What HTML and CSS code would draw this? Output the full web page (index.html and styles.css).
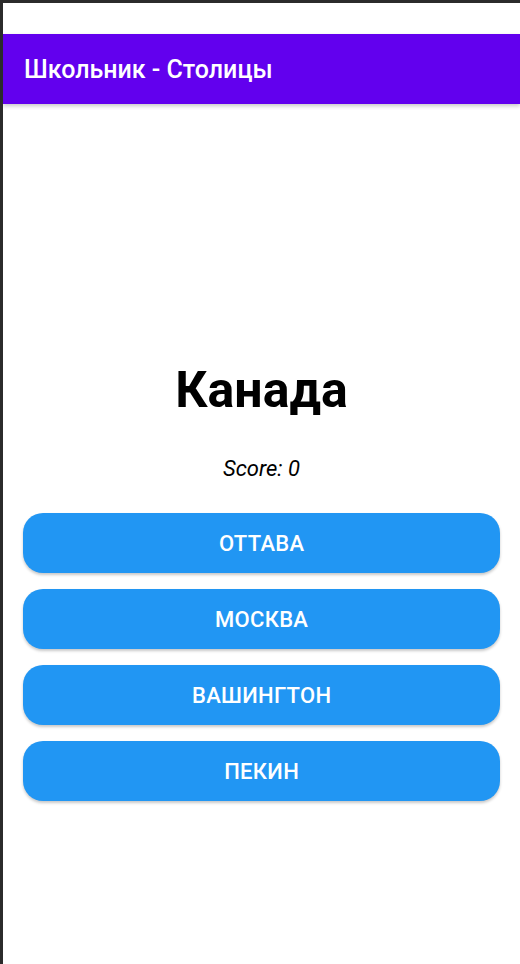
FILE: index.html
```html
<!DOCTYPE html>
<html lang="ru">
<head>
<meta charset="utf-8">
<title>Школьник - Столицы</title>
<link rel="stylesheet" href="styles.css">
</head>
<body>
<div class="frame">
  <div class="status"></div>
  <header class="appbar">Школьник - Столицы</header>
  <main class="content">
    <h1 class="country">Канада</h1>
    <p class="score">Score: 0</p>
    <div class="answers">
      <button class="answer">Оттава</button>
      <button class="answer">Москва</button>
      <button class="answer">Вашингтон</button>
      <button class="answer">Пекин</button>
    </div>
  </main>
</div>
</body>
</html>
```
FILE: styles.css
```css
* { box-sizing: border-box; }
html, body {
  margin: 0;
  padding: 0;
  background: #ffffff;
  font-family: Roboto, "Noto Sans", sans-serif;
}
.frame {
  width: 520px;
  height: 964px;
  border-top: 3px solid #2b2b2b;
  border-left: 3px solid #2b2b2b;
  background: #ffffff;
  overflow: hidden;
}
.status {
  height: 31px;
}
.appbar {
  height: 70px;
  background: #6200ee;
  color: #ffffff;
  font-size: 25px;
  font-weight: 500;
  display: flex;
  align-items: center;
  padding-left: 21px;
  padding-top: 1px;
  box-shadow: 0 2px 4px rgba(0, 0, 0, 0.22);
  position: relative;
}
.content {
  padding: 0 20px;
  display: flex;
  flex-direction: column;
}
.country {
  margin: 257px 0 0;
  font-size: 50px;
  line-height: 58px;
  font-weight: 700;
  text-align: center;
  color: #000000;
}
.score {
  margin: 37px 0 0;
  font-size: 22px;
  line-height: 26px;
  font-style: italic;
  text-align: center;
  color: #000000;
}
.answers {
  margin-top: 31px;
  display: flex;
  flex-direction: column;
  gap: 16px;
}
.answer {
  height: 60px;
  border: none;
  border-radius: 20px;
  background: #2196f3;
  color: #ffffff;
  font-family: Roboto, "Noto Sans", sans-serif;
  font-size: 22px;
  font-weight: 500;
  text-transform: uppercase;
  letter-spacing: 0.3px;
  padding: 1px 0 0 0.3px;
  box-shadow: 0 2px 3px rgba(0, 0, 0, 0.22);
}
```
